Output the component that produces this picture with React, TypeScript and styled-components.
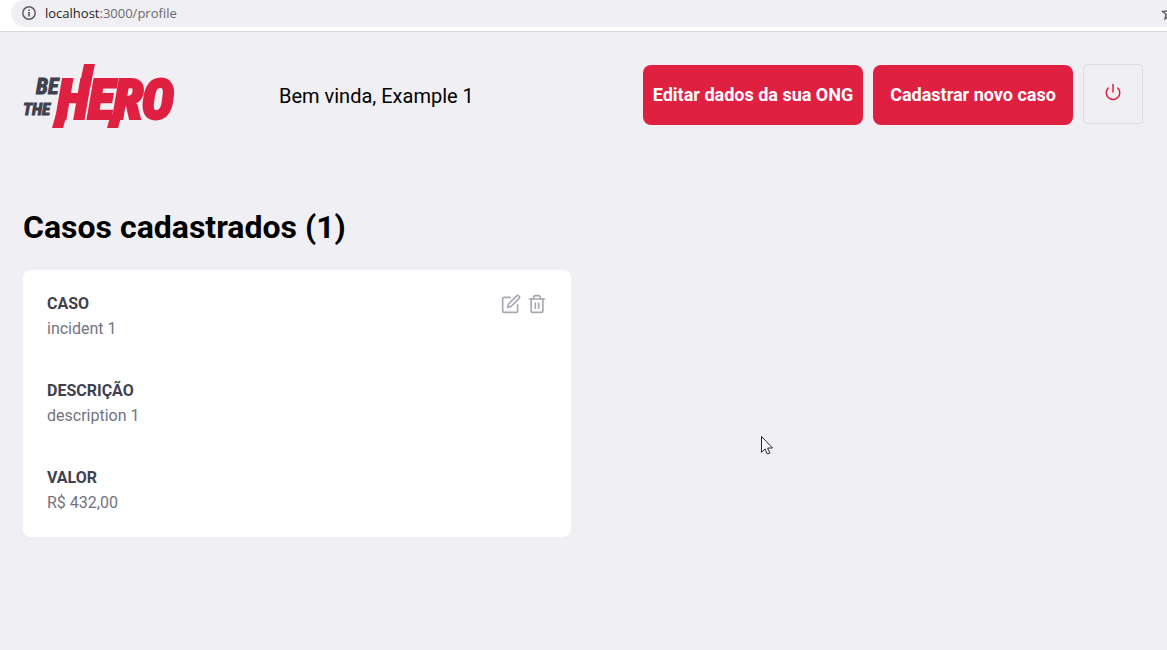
import React from "react";
import styled, { createGlobalStyle } from "styled-components";
import { FiEdit, FiPower, FiTrash2 } from "react-icons/fi";

const GlobalStyle = createGlobalStyle`
  * { box-sizing: border-box; margin: 0; padding: 0; }
  body { background: #f0eff4; -webkit-font-smoothing: antialiased; }
  body, button, input { font-family: Roboto, "Liberation Sans", sans-serif; }
  button { cursor: pointer; }
`;

const BrowserBar = styled.div`
  display: flex;
  align-items: flex-start;
  height: 32px;
  padding-left: 11px;
  background: #fff;
  border-bottom: 1px solid #d9d8dd;
  overflow: hidden;
`;

const AddressBar = styled.div`
  display: flex;
  flex: 1;
  align-items: center;
  gap: 8px;
  height: 27px;
  padding: 0 0 2px 10px;
  background: #f0eff4;
  border-radius: 14px 0 0 14px;
  overflow: hidden;
`;

const Address = styled.p`
  flex: 1;
  color: #6b6a70;
  font: 13px/20px "Open Sans", "Noto Sans", sans-serif;
`;

const Host = styled.span`
  color: #1f1e24;
`;

const StarIcon = styled.svg`
  flex: none;
  margin-right: -10px;
`;

const Page = styled.main`
  width: 100%;
  max-width: 1168px;
  margin: 32px auto;
  padding: 0 24px 0 23px;
`;

const Header = styled.header`
  display: flex;
  align-items: center;
`;

const Logo = styled.svg`
  flex: none;
  width: 152px;
  height: 64px;
  overflow: visible;
`;

const Welcome = styled.span`
  margin-left: 104px;
  font-size: 20px;
  line-height: 24px;
  color: #000;
`;

const Actions = styled.div`
  display: flex;
  align-items: flex-end;
  gap: 10px;
  margin: 0 0 3px auto;
`;

const ActionButton = styled.button<{ $width: number }>`
  width: ${(p) => p.$width}px;
  height: 60px;
  padding-bottom: 2px;
  background: #e02041;
  border: 0;
  border-radius: 8px;
  color: #fff;
  font-size: 18px;
  font-weight: 700;
  white-space: nowrap;
`;

const LogoutButton = styled.button`
  display: flex;
  align-items: center;
  justify-content: center;
  width: 60px;
  height: 60px;
  margin-bottom: 1px;
  padding-bottom: 4px;
  background: transparent;
  border: 1px solid #dcdce6;
  border-radius: 4px;
  color: #e02041;
`;

const Title = styled.h1`
  margin: 80px 0 24px;
  font-size: 32px;
  font-weight: 700;
  line-height: 38px;
  color: #000;
`;

const CaseList = styled.ul`
  display: grid;
  grid-template-columns: repeat(2, 1fr);
  gap: 24px;
  list-style: none;
`;

const CaseCard = styled.li`
  display: flex;
  justify-content: space-between;
  align-items: flex-start;
  padding: 24px;
  background: #fff;
  border-radius: 8px;
`;

const Fields = styled.dl`
  display: flex;
  flex-direction: column;
  gap: 42px;
`;

const Label = styled.dt`
  margin-bottom: 5px;
  color: #41414d;
  font-size: 16px;
  font-weight: 700;
  line-height: 19px;
`;

const Value = styled.dd`
  color: #737380;
  font-size: 16px;
  line-height: 21px;
`;

const CardActions = styled.div`
  display: flex;
  gap: 6px;
`;

const IconButton = styled.button`
  display: flex;
  background: transparent;
  border: 0;
  color: #a8a8b3;
`;

const Pointer = styled.svg`
  position: absolute;
  left: 760px;
  top: 435px;
  pointer-events: none;
`;

const fields = [
  { label: "CASO", value: "incident 1" },
  { label: "DESCRIÇÃO", value: "description 1" },
  { label: "VALOR", value: "R$ 432,00" },
];

function BrandLogo() {
  return (
    <Logo viewBox="0 0 152 64" role="img" aria-label="Be The Hero">
      <g
        fontFamily='"Roboto Condensed", Roboto, "Liberation Sans", sans-serif'
        fontWeight="700"
        fontStyle="italic"
      >
        <g fill="#41414d">
          <text x="13" y="30" fontSize="22" stroke="#41414d">BE</text>
          <text x="0" y="51" fontSize="17" stroke="#41414d">THE</text>
        </g>
        <text x="34" y="54" fontSize="53" fill="#e02041" stroke="#e02041" strokeWidth="4">HERO</text>
      </g>
      <g fill="#e02041">
        <path d="M33 50h11l-4 14H29z" />
        <path d="M61 0h11l-5 24H56z" />
        <path d="M88 50h11l-4 14H84z" />
      </g>
    </Logo>
  );
}

export default function App() {
  return (
    <>
      <GlobalStyle />
      <BrowserBar>
        <AddressBar>
          <svg width="16" height="16" viewBox="0 0 16 16" fill="none" stroke="#5f5e64" aria-hidden="true">
            <circle cx="8" cy="8" r="6.2" strokeWidth="1.5" />
            <path d="M8 7v4.4M8 4.4v1.6" strokeWidth="1.7" />
          </svg>
          <Address>
            <Host>localhost</Host>:3000/profile
          </Address>
          <StarIcon width="16" height="16" viewBox="0 0 16 16" fill="none" stroke="#5f5e64" strokeWidth="1.5" aria-hidden="true">
            <path d="M8 2l1.8 4.1 4.4.4-3.3 2.9 1 4.4L8 11.5l-3.9 2.3 1-4.4-3.3-2.9 4.4-.4z" />
          </StarIcon>
        </AddressBar>
      </BrowserBar>
      <Page>
        <Header>
          <BrandLogo />
          <Welcome>Bem vinda, Example 1</Welcome>
          <Actions>
            <ActionButton type="button" $width={220}>Editar dados da sua ONG</ActionButton>
            <ActionButton type="button" $width={200}>Cadastrar novo caso</ActionButton>
            <LogoutButton type="button" aria-label="Sair">
              <FiPower size={18} />
            </LogoutButton>
          </Actions>
        </Header>
        <Title>Casos cadastrados (1)</Title>
        <CaseList>
          <CaseCard>
            <Fields>
              {fields.map((field) => (
                <div key={field.label}>
                  <Label>{field.label}</Label>
                  <Value>{field.value}</Value>
                </div>
              ))}
            </Fields>
            <CardActions>
              <IconButton type="button" aria-label="Editar caso">
                <FiEdit size={20} />
              </IconButton>
              <IconButton type="button" aria-label="Excluir caso">
                <FiTrash2 size={20} />
              </IconButton>
            </CardActions>
          </CaseCard>
        </CaseList>
      </Page>
      <Pointer width="14" height="21" viewBox="0 0 14 21" aria-hidden="true">
        <path d="M1.5 1.5v15.8l3.6-3.4 2.2 5.1 2.5-1-2.2-5h4.9z" fill="#fff" stroke="#25242c" strokeWidth="1" />
      </Pointer>
    </>
  );
}
